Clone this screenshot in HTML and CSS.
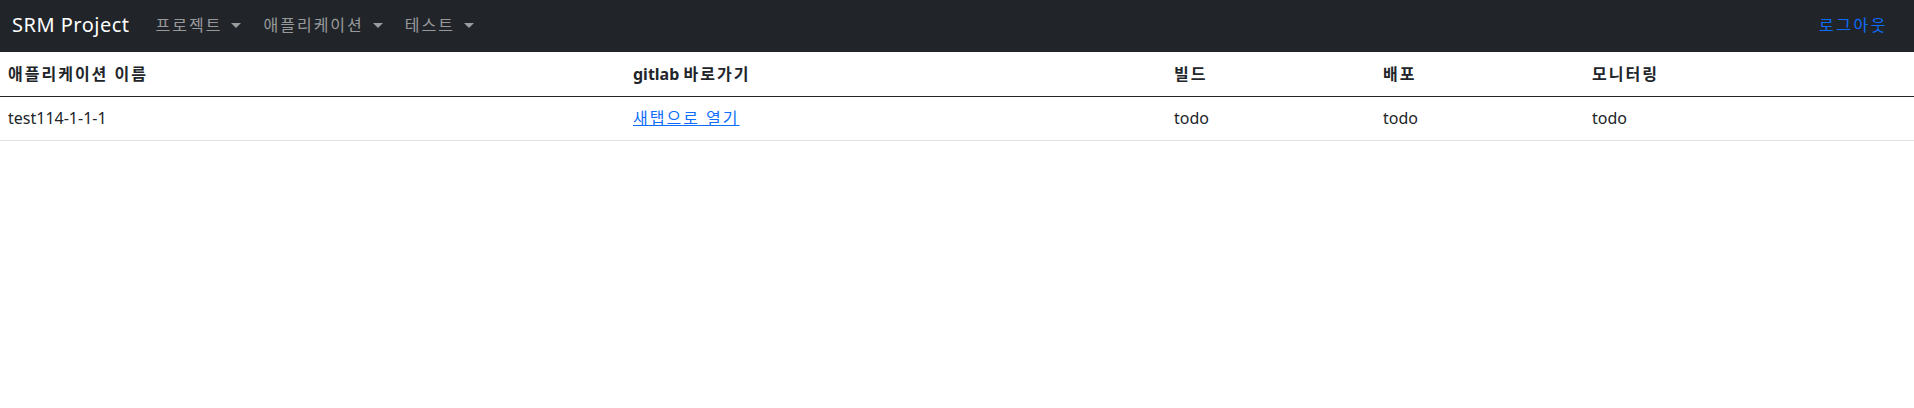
FILE: index.html
```html
<!DOCTYPE html>
<html lang="ko">
<head>
<meta charset="utf-8">
<title>SRM Project</title>
<link rel="stylesheet" href="styles.css">
</head>
<body>
<nav class="navbar">
  <div class="nav-inner">
    <a class="brand" href="#">SRM Project</a>
    <ul class="nav-list">
      <li><a class="nav-link dropdown" href="#">프로젝트</a></li>
      <li><a class="nav-link dropdown" href="#">애플리케이션</a></li>
      <li><a class="nav-link dropdown" href="#">테스트</a></li>
    </ul>
    <a class="logout" href="#">로그아웃</a>
  </div>
</nav>
<table class="app-table">
  <colgroup>
    <col class="c-name">
    <col class="c-git">
    <col class="c-build">
    <col class="c-deploy">
    <col class="c-mon">
  </colgroup>
  <thead>
    <tr>
      <th class="ko">애플리케이션 이름</th>
      <th><span class="latin">gitlab</span> <span class="ko">바로가기</span></th>
      <th class="ko">빌드</th>
      <th class="ko">배포</th>
      <th class="ko">모니터링</th>
    </tr>
  </thead>
  <tbody>
    <tr>
      <td>test114-1-1-1</td>
      <td><a class="link ko" href="#">새탭으로 열기</a></td>
      <td>todo</td>
      <td>todo</td>
      <td>todo</td>
    </tr>
  </tbody>
</table>
</body>
</html>
```

FILE: styles.css
```css
* { box-sizing: border-box; }

body {
  margin: 0;
  font-family: "Noto Sans", "Noto Sans CJK KR", sans-serif;
  font-size: 16px;
  line-height: 24px;
  color: #212529;
  background: #fff;
}

.ko { letter-spacing: 2px; }
.latin { letter-spacing: 0; }

.navbar {
  background: #212529;
  height: 52px;
}

.nav-inner {
  height: 100%;
  display: flex;
  align-items: center;
  padding: 0 20px 2px 12px;
}

.brand {
  color: #fff;
  font-size: 20px;
  line-height: 30px;
  letter-spacing: 0.5px;
  text-decoration: none;
  margin-right: 15px;
}

.nav-list {
  list-style: none;
  margin: 0;
  padding: 0;
  display: flex;
  flex: 1;
}

.nav-link {
  display: block;
  padding: 8px 11px;
  color: rgba(255, 255, 255, 0.55);
  text-decoration: none;
  letter-spacing: 2px;
}

.dropdown::after {
  content: "";
  display: inline-block;
  margin-left: 9px;
  vertical-align: 3px;
  border-top: 5px solid;
  border-right: 5px solid transparent;
  border-left: 5px solid transparent;
}

.logout {
  padding: 8px 6px 8px 8px;
  color: #0d6efd;
  text-decoration: none;
  letter-spacing: 2.5px;
}

.app-table {
  width: 100%;
  border-collapse: collapse;
  table-layout: fixed;
}

.c-name { width: 625px; }
.c-git { width: 541px; }
.c-build { width: 209px; }
.c-deploy { width: 209px; }

.app-table th {
  text-align: left;
  font-weight: 700;
  padding: 10px 8px 10px;
  border-bottom: 1.5px solid #212529;
}

.app-table td {
  padding: 9px 8px 10px;
  border-bottom: 1px solid #dee2e6;
}

.link {
  color: #0d6efd;
  text-decoration: underline;
}
```
